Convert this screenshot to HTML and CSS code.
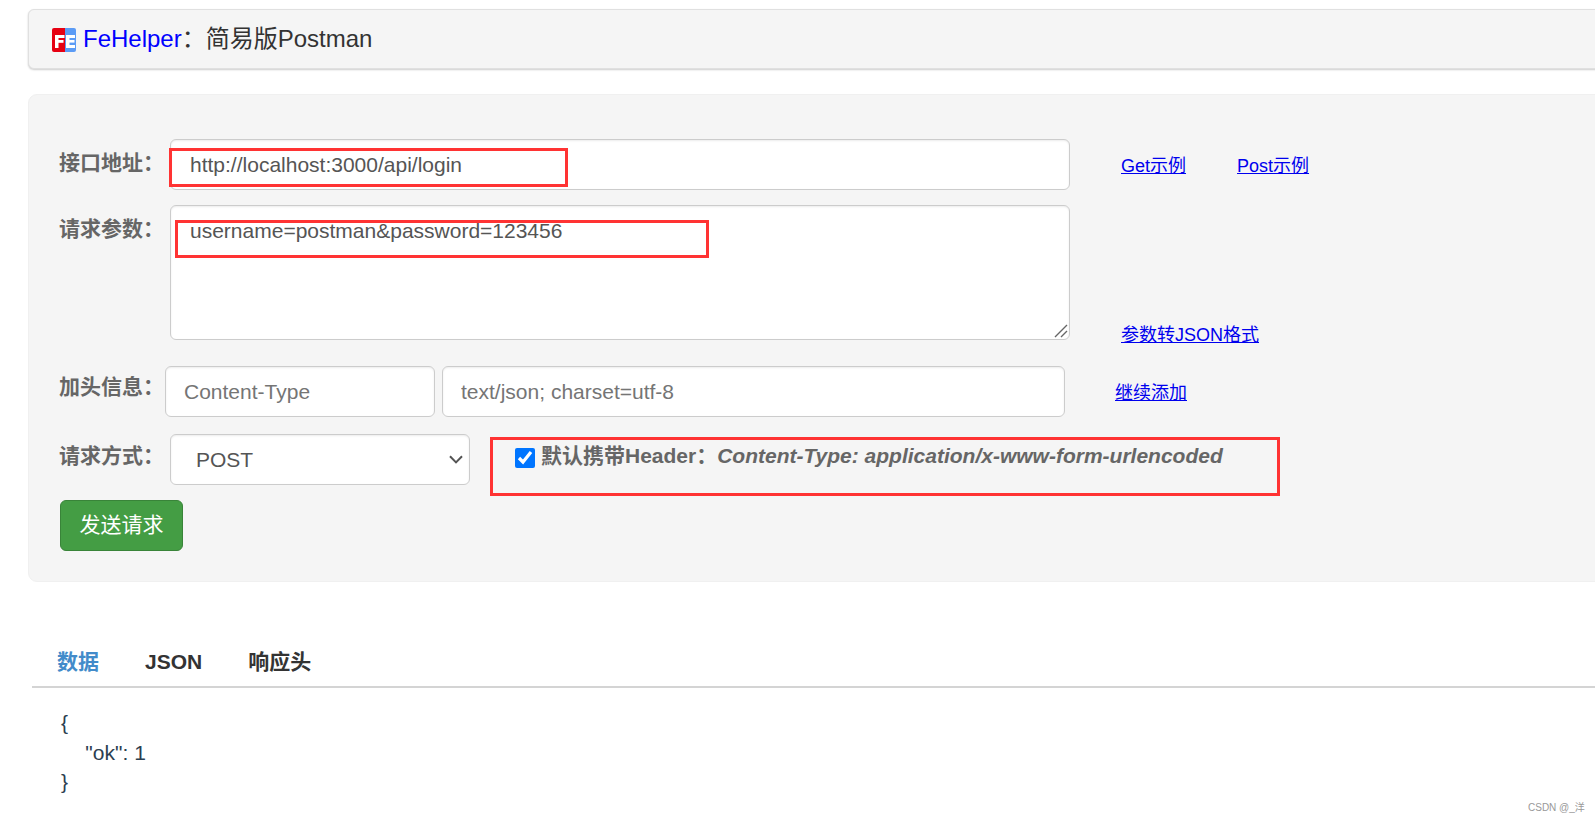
FILE: index.html
```html
<!DOCTYPE html>
<html lang="zh-CN">
<head>
<meta charset="utf-8">
<title>FeHelper&#xFF1A;简易版Postman</title>
<link rel="stylesheet" href="styles.css">
</head>
<body>
<div class="page">
  <header class="title-panel">
    <svg class="logo" viewBox="0 0 24 24" aria-hidden="true">
      <path class="logo-red" d="M2 0H13V24H2Q0 24 0 22V2Q0 0 2 0Z"/>
      <path class="logo-blue" d="M13 0H22Q24 0 24 2V22Q24 24 22 24H13Z"/>
      <rect class="logo-white" x="3" y="7" width="9.5" height="3"/>
      <rect class="logo-white" x="3" y="7" width="3.5" height="13"/>
      <rect class="logo-white" x="3" y="12" width="8.5" height="2.8"/>
      <rect class="logo-white" x="14" y="7" width="9" height="3"/>
      <rect class="logo-white" x="14" y="7" width="3.5" height="13"/>
      <rect class="logo-white" x="14" y="12" width="8.5" height="2.6"/>
      <rect class="logo-white" x="14" y="17" width="9" height="3"/>
    </svg>
    <h1 class="title"><a class="brand">FeHelper</a>&#xFF1A;简易版Postman</h1>
  </header>

  <form class="form-panel">
    <div class="row row-url">
      <label class="field-label">接口地址&#xFF1A;</label>
      <input class="control control-main" type="text" value="http://localhost:3000/api/login">
      <a class="link link-first" href="#">Get示例</a>
      <a class="link link-next" href="#">Post示例</a>
    </div>
    <div class="row row-params">
      <label class="field-label">请求参数&#xFF1A;</label>
      <textarea class="control control-main control-area">username=postman&amp;password=123456</textarea>
      <a class="link link-first link-bottom" href="#">参数转JSON格式</a>
    </div>
    <div class="row row-headers">
      <label class="field-label field-label-short">加头信息&#xFF1A;</label>
      <input class="control control-key" type="text" placeholder="Content-Type">
      <input class="control control-value" type="text" placeholder="text/json; charset=utf-8">
      <a class="link link-first" href="#">继续添加</a>
    </div>
    <div class="row row-method">
      <label class="field-label">请求方式&#xFF1A;</label>
      <select class="control control-select"><option>POST</option><option>GET</option></select>
      <label class="default-header">
        <input class="check" type="checkbox" checked>
        <span>默认携带Header&#xFF1A;<em class="header-value">Content-Type: application/x-www-form-urlencoded</em></span>
      </label>
    </div>
    <button class="send" type="button">发送请求</button>
  </form>

  <nav class="tabs">
    <a class="tab tab-active">数据</a>
    <a class="tab">JSON</a>
    <a class="tab">响应头</a>
  </nav>
  <pre class="response">{
    "ok": 1
}</pre>

  <div class="mark mark-url"></div>
  <div class="mark mark-params"></div>
  <div class="mark mark-header"></div>
  <div class="watermark">CSDN @_洋</div>
</div>
</body>
</html>
```
FILE: styles.css
```css
* { box-sizing: border-box; }
html, body { margin: 0; padding: 0; background: #fff; overflow: hidden; }
body {
  font-family: "Liberation Sans", "Noto Sans CJK SC", sans-serif;
  font-size: 21px;
  color: #333;
}
.page {
  position: relative;
  width: 1595px;
  height: 822px;
  overflow: hidden;
  padding: 9px 0 0 28px;
}

/* title */
.title-panel {
  display: flex;
  align-items: center;
  gap: 7px;
  width: 1700px;
  height: 60px;
  padding-left: 23px;
  background: #f5f5f5;
  border: 1px solid #e0e0e0;
  border-radius: 6px;
  box-shadow: 0 1px 2px rgba(0,0,0,.2);
}
.logo { width: 24px; height: 24px; flex: none; margin-top: 1px; }
.logo-red { fill: #e60012; }
.logo-blue { fill: #5b9bf5; }
.logo-white { fill: #fff; }
.title { margin: 0; font-size: 24px; font-weight: 400; line-height: 34px; color: #333; }
.brand { color: #0000ff; }

/* form */
.form-panel {
  width: 1700px;
  height: 488px;
  margin-top: 25px;
  padding: 45px 0 0 31px;
  background: #f5f5f5;
  border-radius: 9px;
  border: 1px solid #f0f0f0;
}
.row { display: flex; align-items: flex-start; }
.row-url { height: 51px; margin-top: -1px; }
.row-params { height: 135px; margin-top: 15px; }
.row-headers { height: 51px; margin-top: 26px; }
.row-method { height: 51px; margin-top: 17px; }

.field-label {
  flex: none;
  width: 110px;
  margin-top: 9px;
  text-indent: -1px;
  font-weight: 700;
  line-height: 30px;
  color: #666;
}
.field-label-short { width: 105px; margin-top: 6px; }
.row-method .field-label { margin-top: 7px; }

.control {
  flex: none;
  height: 51px;
  padding: 9px 18px 9px 19px;
  font: 21px/30px "Liberation Sans", "Noto Sans CJK SC", sans-serif;
  color: #555;
  background-color: #fff;
  border: 1px solid #ccc;
  border-radius: 6px;
  box-shadow: inset 0 1px 2px rgba(0,0,0,.08);
  outline: none;
}
.control-main { width: 900px; }
.control-area { height: 135px; padding-top: 10px; resize: vertical; display: block; }
.control-area::-webkit-resizer {
  background: url("data:image/svg+xml,%3Csvg xmlns='http://www.w3.org/2000/svg' width='15' height='15' viewBox='0 0 15 15'%3E%3Cpath d='M1 13L13 1M7 13L13 7' fill='none' stroke='%23666' stroke-width='1.4'/%3E%3C/svg%3E") no-repeat;
}
.control-key { width: 270px; padding-left: 18px; }
.control-value { width: 623px; margin-left: 7px; padding-left: 18px; }
.control::placeholder { color: #757575; opacity: 1; }
.control-select {
  width: 300px;
  padding: 0 28px 0 25px;
  appearance: none;
  -webkit-appearance: none;
  background-image: url("data:image/svg+xml,%3Csvg xmlns='http://www.w3.org/2000/svg' width='14' height='9' viewBox='0 0 14 9'%3E%3Cpath d='M1 1.2L7 7.4L13 1.2' fill='none' stroke='%23555' stroke-width='2'/%3E%3C/svg%3E");
  background-repeat: no-repeat;
  background-position: right 6px center;
}

.link {
  flex: none;
  margin-top: 17px;
  font-size: 18px;
  line-height: 20px;
  color: #0000ee;
  text-decoration: underline;
}
.link-first { margin-left: 51px; }
.link-next { margin-left: 51px; }
.link-bottom { margin-top: 120px; }
.row-headers .link-first { margin-left: 50px; }

.default-header {
  display: flex;
  align-items: flex-start;
  gap: 6px;
  margin: 7px 0 0 45px;
  font-weight: 700;
  line-height: 30px;
  color: #666;
}
.check {
  flex: none;
  width: 20px;
  height: 20px;
  margin: 7px 0 0;
  accent-color: #0075ff;
}

.send {
  display: block;
  width: 123px;
  height: 51px;
  margin-top: 15px;
  padding: 0 0 2px;
  font: 21px/30px "Liberation Sans", "Noto Sans CJK SC", sans-serif;
  color: #fff;
  background: #449d44;
  border: 1px solid #398439;
  border-radius: 6px;
}

/* result */
.tabs {
  display: flex;
  gap: 46px;
  height: 41px;
  margin: 65px 0 0 4px;
  padding-left: 25px;
  border-bottom: 2px solid #d4d4d4;
  width: 1700px;
}
.tab { font-weight: 700; line-height: 30px; color: #333; }
.tab-active { color: #428bca; }

.response {
  margin: 20px 0 0 33px;
  font: 21px/29.5px "Liberation Sans", "Noto Sans CJK SC", sans-serif;
  word-spacing: .25px;
  color: #2c3e50;
  white-space: pre;
}

/* overlays */
.mark { position: absolute; border: 3px solid #f33; }
.mark-url { left: 169px; top: 148px; width: 399px; height: 39px; }
.mark-params { left: 175px; top: 220px; width: 534px; height: 38px; }
.mark-header { left: 490px; top: 437px; width: 790px; height: 59px; }
.watermark {
  position: absolute;
  left: 1528px;
  top: 802px;
  font-size: 10px;
  line-height: 12px;
  color: #999;
}
```
